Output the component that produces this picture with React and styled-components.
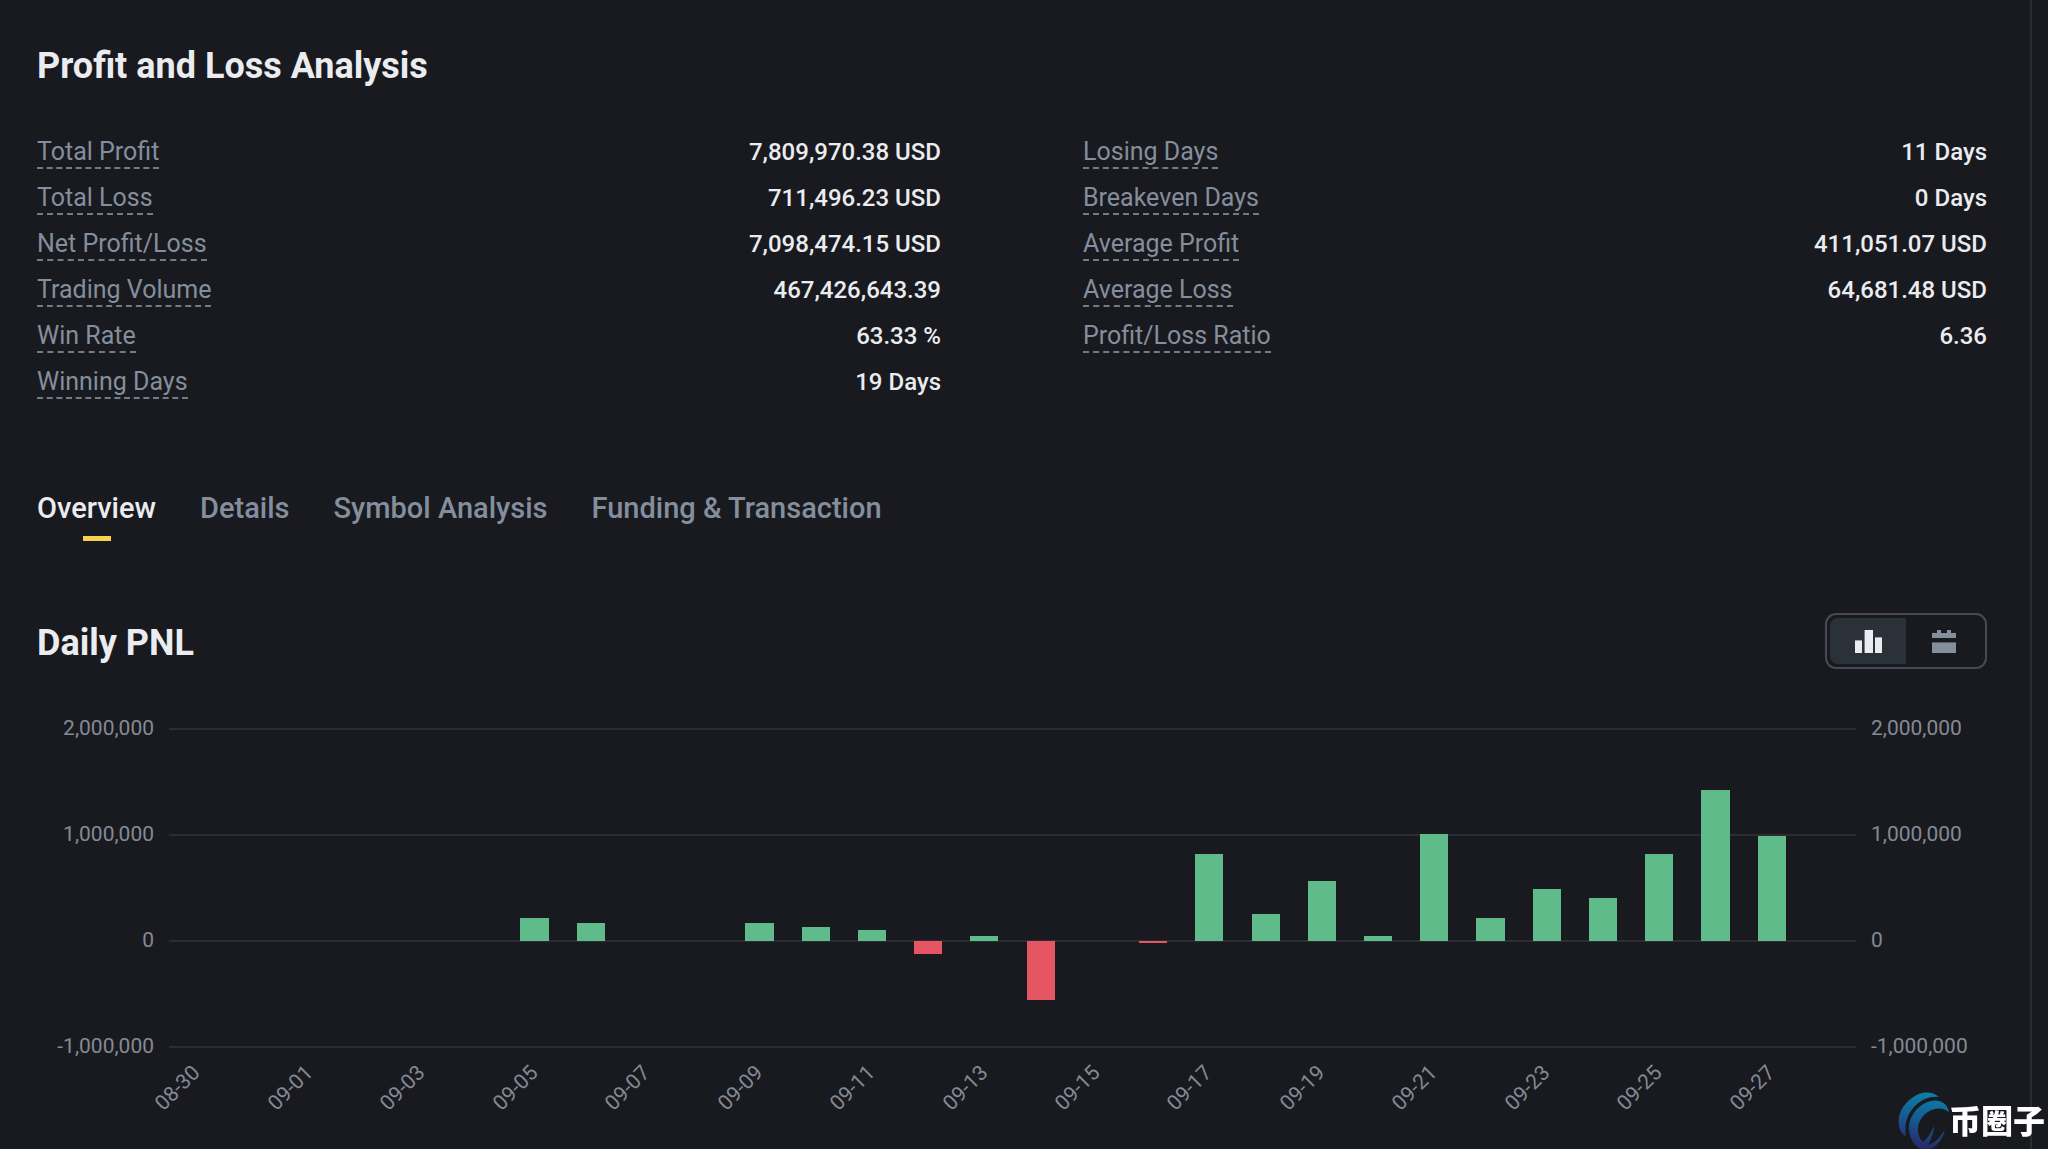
import React, { useState } from 'react';
import styled, { createGlobalStyle } from 'styled-components';

const GlobalStyle = createGlobalStyle`
  * {
    box-sizing: border-box;
  }

  body {
    margin: 0;
    background-color: #191a1f;
    color: #eaecef;
    font-family: Roboto, "Liberation Sans", sans-serif;
  }
`;

const Page = styled.main`
  display: flex;
  flex-direction: column;
  min-height: 100vh;
  margin-right: 16px;
  padding: 45px 43px 0 37px;
  border-right: 2px solid #2b2d32;
`;

const Title = styled.h2`
  margin: 0;
  font-size: 36px;
  line-height: 42px;
  font-weight: 700;
`;

const Stats = styled.section`
  display: grid;
  grid-template-columns: 1fr 1fr;
  column-gap: 142px;
  margin-top: 50px;
`;

const StatList = styled.dl`
  margin: 0;
`;

const StatRow = styled.div`
  display: flex;
  justify-content: space-between;
  align-items: flex-start;
  height: 46px;
`;

const StatLabel = styled.dt`
  border-bottom: 2px dashed #747b87;
  color: #848e9c;
  font-size: 25px;
  line-height: 30px;
`;

const StatValue = styled.dd`
  margin: 0;
  font-size: 24px;
  line-height: 30px;
  font-weight: 500;
`;

const Tabs = styled.nav`
  display: flex;
  gap: 44px;
  margin-top: 77px;
`;

const Tab = styled.button`
  display: flex;
  flex-direction: column;
  align-items: center;
  gap: 10px;
  padding: 0;
  border: none;
  background: none;
  color: ${({ $active }) => ($active ? '#eaecef' : '#848e9c')};
  font-family: inherit;
  font-size: 29px;
  line-height: 36px;
  font-weight: 500;
  cursor: pointer;

  &::after {
    content: '';
    width: 28px;
    height: 5px;
    background-color: ${({ $active }) => ($active ? '#f9d350' : 'transparent')};
  }
`;

const ChartHeader = styled.header`
  display: flex;
  justify-content: space-between;
  align-items: center;
  margin-top: 72px;
`;

const ChartTitle = styled(Title)`
  padding-top: 4px;
`;

const Toggle = styled.div`
  display: flex;
  padding: 3px;
  border: 2px solid #474a50;
  border-radius: 11px;
`;

const ToggleButton = styled.button`
  display: flex;
  align-items: center;
  justify-content: center;
  width: 76px;
  height: 46px;
  padding: 0;
  border: none;
  border-radius: 8px 0 0 8px;
  background-color: ${({ $active }) => ($active ? '#2b3139' : 'transparent')};
  color: ${({ $active }) => ($active ? '#eaecef' : '#848e9c')};
  cursor: pointer;
`;

const Chart = styled.section`
  display: grid;
  grid-template-columns: 117px 1fr 116px;
  column-gap: 15px;
  margin-top: 59px;
`;

const Axis = styled.div`
  display: flex;
  flex-direction: column;
  justify-content: space-between;
  height: 342px;
  margin-top: -12px;
  color: #848a95;
  font-size: 21px;
  line-height: 24px;
  text-align: ${({ $side }) => ($side === 'left' ? 'right' : 'left')};
`;

const Plot = styled.div`
  display: flex;
  box-sizing: content-box;
  height: 318px;
  border-bottom: 2px solid #2b2d32;
  background-image: repeating-linear-gradient(#2b2d32 0 2px, transparent 2px 106px);
`;

const Slot = styled.div`
  flex: 1;
  display: flex;
  flex-direction: column;
  align-items: center;
  justify-content: ${({ $loss }) => ($loss ? 'flex-start' : 'flex-end')};
  height: ${({ $loss }) => ($loss ? '318px' : '213px')};
  padding-top: ${({ $loss }) => ($loss ? '213px' : '0')};
`;

const Bar = styled.div`
  width: 50%;
  background-color: ${({ $loss }) => ($loss ? '#e65562' : '#5fbb8a')};
`;

const Dates = styled.div`
  display: flex;
  grid-column: 2;
  margin-top: 4px;
  color: #848a95;
  font-size: 21px;
  line-height: 20px;
`;

const DateSlot = styled.div`
  flex: 1 1 0;
  display: flex;
  justify-content: flex-end;
  width: 0;
  padding-right: 36px;
`;

const DateLabel = styled.span`
  flex: none;
  white-space: nowrap;
  transform: rotate(-45deg);
  transform-origin: top right;
`;

const Watermark = styled.div`
  position: fixed;
  right: 3px;
  bottom: 0;
  display: flex;
  align-items: flex-start;
  height: 57px;
  color: #fff;
  font-family: "Noto Sans CJK SC", sans-serif;
  font-size: 32px;
  line-height: 54px;
  font-weight: 900;
`;

const leftStats = [
  ['Total Profit', '7,809,970.38 USD'],
  ['Total Loss', '711,496.23 USD'],
  ['Net Profit/Loss', '7,098,474.15 USD'],
  ['Trading Volume', '467,426,643.39'],
  ['Win Rate', '63.33 %'],
  ['Winning Days', '19 Days'],
];

const rightStats = [
  ['Losing Days', '11 Days'],
  ['Breakeven Days', '0 Days'],
  ['Average Profit', '411,051.07 USD'],
  ['Average Loss', '64,681.48 USD'],
  ['Profit/Loss Ratio', '6.36'],
];

const tabs = ['Overview', 'Details', 'Symbol Analysis', 'Funding & Transaction'];

const ticks = ['2,000,000', '1,000,000', '0', '-1,000,000'];

// daily pnl in thousands of USD
const days = [
  ['08-30', 0], ['08-31', 0], ['09-01', 0], ['09-02', 0], ['09-03', 0],
  ['09-04', 0], ['09-05', 217], ['09-06', 170], ['09-07', 0], ['09-08', 0],
  ['09-09', 170], ['09-10', 132], ['09-11', 104], ['09-12', -120], ['09-13', 50],
  ['09-14', -557], ['09-15', 0], ['09-16', -19], ['09-17', 821], ['09-18', 255],
  ['09-19', 566], ['09-20', 50], ['09-21', 1005], ['09-22', 217], ['09-23', 490],
  ['09-24', 406], ['09-25', 821], ['09-26', 1425], ['09-27', 990], ['09-28', 0],
];

const PX_PER_THOUSAND = 0.106;

const BarsIcon = () => (
  <svg width="27" height="23" viewBox="0 0 27 23" fill="currentColor" aria-hidden="true">
    <rect x="0" y="10.4" width="7" height="12.6" />
    <rect x="9.6" y="0" width="8.4" height="23" />
    <rect x="20" y="7.4" width="7" height="15.6" />
  </svg>
);

const CalendarIcon = () => (
  <svg width="24" height="23" viewBox="0 0 24 23" fill="currentColor" aria-hidden="true">
    <path d="M0 3h5V0h4v3h6V0h4v3h5v5H0z" />
    <rect y="12.4" width="24" height="10.6" />
  </svg>
);

const SwooshLogo = () => (
  <svg width="51" height="57" viewBox="0 0 51 57" aria-hidden="true">
    <defs>
      <linearGradient id="swoosh" gradientUnits="userSpaceOnUse" x1="30" y1="0" x2="18" y2="57">
        <stop offset="0" stopColor="#0f7fa8" />
        <stop offset="0.5" stopColor="#155a92" />
        <stop offset="1" stopColor="#2b2468" />
      </linearGradient>
    </defs>
    <g fill="url(#swoosh)">
      <path d="M41 5C34 -1 23 -1 14 6C4 13 -1 24 1 34C2 39 4 42 8 44C6 33 9 22 17 14C24 7 33 4 41 5z" />
      <path d="M51 20C49 11 42 7 33 9C20 12 10 25 11 38C12 47 16 54 23 57H32C40 54 45 46 47 37C43 45 37 51 30 53C33 47 36 40 36 34C33 41 29 47 25 50C18 43 18 31 26 23C33 16 43 14 51 20z" />
    </g>
  </svg>
);

const StatTable = ({ rows }) => (
  <StatList>
    {rows.map(([label, value]) => (
      <StatRow key={label}>
        <StatLabel>{label}</StatLabel>
        <StatValue>{value}</StatValue>
      </StatRow>
    ))}
  </StatList>
);

const AxisLabels = ({ side }) => (
  <Axis $side={side}>
    {ticks.map((tick) => (
      <span key={tick}>{tick}</span>
    ))}
  </Axis>
);

const PnlChart = () => (
  <Chart>
    <AxisLabels side="left" />
    <Plot>
      {days.map(([date, value]) => (
        <Slot key={date} $loss={value < 0}>
          <Bar
            $loss={value < 0}
            style={{ height: Math.round(Math.abs(value) * PX_PER_THOUSAND) }}
          />
        </Slot>
      ))}
    </Plot>
    <AxisLabels side="right" />
    <Dates>
      {days.map(([date], index) => (
        <DateSlot key={date}>
          {index % 2 === 0 && <DateLabel>{date}</DateLabel>}
        </DateSlot>
      ))}
    </Dates>
  </Chart>
);

const App = () => {
  const [activeTab, setActiveTab] = useState('Overview');
  const [view, setView] = useState('chart');

  return (
    <>
      <GlobalStyle />
      <Page>
        <Title>Profit and Loss Analysis</Title>
        <Stats>
          <StatTable rows={leftStats} />
          <StatTable rows={rightStats} />
        </Stats>
        <Tabs>
          {tabs.map((tab) => (
            <Tab key={tab} type="button" $active={tab === activeTab} onClick={() => setActiveTab(tab)}>
              {tab}
            </Tab>
          ))}
        </Tabs>
        <ChartHeader>
          <ChartTitle>Daily PNL</ChartTitle>
          <Toggle>
            <ToggleButton
              type="button"
              aria-label="Bar chart"
              $active={view === 'chart'}
              onClick={() => setView('chart')}
            >
              <BarsIcon />
            </ToggleButton>
            <ToggleButton
              type="button"
              aria-label="Calendar"
              $active={view === 'calendar'}
              onClick={() => setView('calendar')}
            >
              <CalendarIcon />
            </ToggleButton>
          </Toggle>
        </ChartHeader>
        <PnlChart />
      </Page>
      <Watermark>
        <SwooshLogo />
        <span>币圈子</span>
      </Watermark>
    </>
  );
};

export default App;
